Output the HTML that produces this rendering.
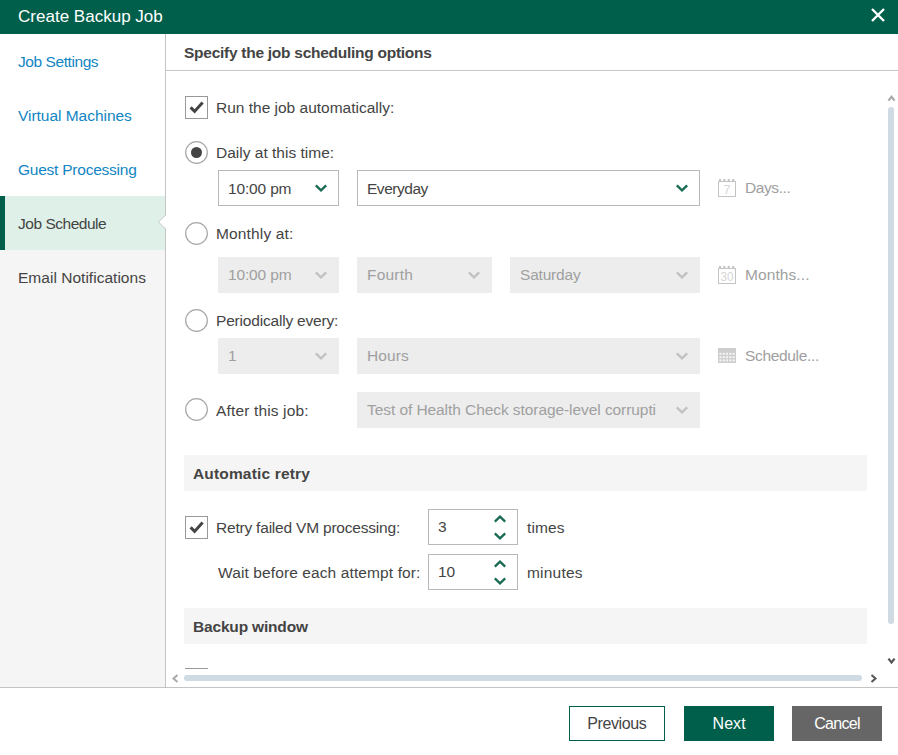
<!DOCTYPE html>
<html>
<head>
<meta charset="utf-8">
<title>Create Backup Job</title>
<style>
*{box-sizing:border-box;margin:0;padding:0}
html,body{width:898px;height:755px;overflow:hidden;background:#fff}
body{font-family:"Liberation Sans",sans-serif;font-size:15.5px;color:#444;position:relative}
.abs{position:absolute}
.t{position:absolute;white-space:nowrap;line-height:20px;height:20px;margin-top:1px}
.bd{font-weight:bold}
.st{margin-top:1px}
.ds{color:#a0a0a0;margin-top:0}
.lnk{color:#a0a0a0;margin-top:0}
.bt{font-size:16px;margin-top:0;line-height:22px;height:22px}
.cb{position:absolute;width:23px;height:23px;border:1px solid #999;background:#fff}
.sec{position:absolute;left:184px;width:683px;height:36px;background:#f5f5f5}
</style>
</head>
<body>
<div class="abs" style="left:0;top:0;width:898px;height:34px;background:#005f4b"></div>
<svg class="abs" style="left:871px;top:8px" width="14" height="14" viewBox="0 0 14 14"><path d="M1 1L13 13M13 1L1 13" stroke="#fff" stroke-width="2.4" fill="none"/></svg>
<div class="abs" style="left:0;top:34px;width:166px;height:653px;border-right:1px solid #c4c4c4;background:#f5f5f5"></div>
<div class="abs" style="left:0;top:34px;width:165px;height:162px;background:#fff"></div>
<div class="abs" style="left:0;top:196px;width:165px;height:54px;background:#dff0e8;border-left:5px solid #005f4b"></div>
<svg class="abs" style="left:158px;top:215px" width="8" height="14" viewBox="0 0 8 14"><path d="M8 0L0.5 7L8 14Z" fill="#fff"/><path d="M7.5 0L0.5 7L7.5 14" stroke="#c8c8c8" stroke-width="1" fill="none"/></svg>
<div class="abs" style="left:166px;top:70px;width:732px;height:1px;background:#c8c8c8"></div>

<div class="cb" style="left:185px;top:96px"><svg width="21" height="21" viewBox="0 0 21 21"><path d="M4.6 10.4L8.6 14.4L16.6 5.6" stroke="#444" stroke-width="3" fill="none"/></svg></div>
<svg class="abs" style="left:185px;top:141px" width="23" height="23" viewBox="0 0 23 23"><circle cx="11.5" cy="11.5" r="10.85" fill="#fff" stroke="#a8a8a8" stroke-width="1.25"/><circle cx="11.5" cy="11.5" r="5.5" fill="#444"/></svg>
<div class="abs" style="left:218px;top:170px;width:121px;height:36px;background:#fff;border:1px solid #b8b8b8"></div><svg class="abs" style="left:315px;top:184px" width="12" height="8" viewBox="0 0 12 8"><path d="M0.8 1.4L6 6.3L11.2 1.4" stroke="#1a6b54" stroke-width="2.4" fill="none"/></svg>
<div class="abs" style="left:357px;top:170px;width:343px;height:36px;background:#fff;border:1px solid #b8b8b8"></div><svg class="abs" style="left:676px;top:184px" width="12" height="8" viewBox="0 0 12 8"><path d="M0.8 1.4L6 6.3L11.2 1.4" stroke="#1a6b54" stroke-width="2.4" fill="none"/></svg>
<svg class="abs" style="left:718px;top:179px" width="18" height="18" viewBox="0 0 18 18"><rect x="0.5" y="2.5" width="17" height="15" fill="#fff" stroke="#c4c4c4"/><path d="M1 0h2.1v2h-2.1zM5.3 0h2.1v2h-2.1zM9.7 0h2.1v2h-2.1zM14.2 0h2.1v2h-2.1z" fill="#c4c4c4"/><text x="9" y="14.6" font-family="Liberation Sans" font-size="12.5" fill="#d6d6d6" text-anchor="middle" >7</text></svg>
<svg class="abs" style="left:185px;top:222px" width="23" height="23" viewBox="0 0 23 23"><circle cx="11.5" cy="11.5" r="10.85" fill="#fff" stroke="#a8a8a8" stroke-width="1.25"/></svg>
<div class="abs" style="left:218px;top:257px;width:121px;height:36px;background:#ededed"></div><svg class="abs" style="left:315px;top:271px" width="12" height="8" viewBox="0 0 12 8"><path d="M0.8 1.4L6 6.3L11.2 1.4" stroke="#c2c2c2" stroke-width="2.4" fill="none"/></svg>
<div class="abs" style="left:357px;top:257px;width:135px;height:36px;background:#ededed"></div><svg class="abs" style="left:468px;top:271px" width="12" height="8" viewBox="0 0 12 8"><path d="M0.8 1.4L6 6.3L11.2 1.4" stroke="#c2c2c2" stroke-width="2.4" fill="none"/></svg>
<div class="abs" style="left:510px;top:257px;width:190px;height:36px;background:#ededed"></div><svg class="abs" style="left:676px;top:271px" width="12" height="8" viewBox="0 0 12 8"><path d="M0.8 1.4L6 6.3L11.2 1.4" stroke="#c2c2c2" stroke-width="2.4" fill="none"/></svg>
<svg class="abs" style="left:718px;top:266px" width="18" height="18" viewBox="0 0 18 18"><rect x="0.5" y="2.5" width="17" height="15" fill="#fff" stroke="#c4c4c4"/><path d="M1 0h2.1v2h-2.1zM5.3 0h2.1v2h-2.1zM9.7 0h2.1v2h-2.1zM14.2 0h2.1v2h-2.1z" fill="#c4c4c4"/><text x="9" y="14.6" font-family="Liberation Sans" font-size="12.5" fill="#d6d6d6" text-anchor="middle" textLength="13" lengthAdjust="spacingAndGlyphs">30</text></svg>
<svg class="abs" style="left:185px;top:309px" width="23" height="23" viewBox="0 0 23 23"><circle cx="11.5" cy="11.5" r="10.85" fill="#fff" stroke="#a8a8a8" stroke-width="1.25"/></svg>
<div class="abs" style="left:218px;top:338px;width:121px;height:36px;background:#ededed"></div><svg class="abs" style="left:315px;top:352px" width="12" height="8" viewBox="0 0 12 8"><path d="M0.8 1.4L6 6.3L11.2 1.4" stroke="#c2c2c2" stroke-width="2.4" fill="none"/></svg>
<div class="abs" style="left:357px;top:338px;width:343px;height:36px;background:#ededed"></div><svg class="abs" style="left:676px;top:352px" width="12" height="8" viewBox="0 0 12 8"><path d="M0.8 1.4L6 6.3L11.2 1.4" stroke="#c2c2c2" stroke-width="2.4" fill="none"/></svg>
<svg class="abs" style="left:718px;top:348px" width="18" height="15" viewBox="0 0 18 15"><rect width="18" height="15" fill="#cdcdcd"/><g fill="#f4f4f4"><rect x="1.4" y="4.8" width="2.1" height="2.1"/><rect x="4.7" y="4.8" width="2.1" height="2.1"/><rect x="8.0" y="4.8" width="2.1" height="2.1"/><rect x="11.3" y="4.8" width="2.1" height="2.1"/><rect x="14.6" y="4.8" width="2.1" height="2.1"/><rect x="1.4" y="8.1" width="2.1" height="2.1"/><rect x="4.7" y="8.1" width="2.1" height="2.1"/><rect x="8.0" y="8.1" width="2.1" height="2.1"/><rect x="11.3" y="8.1" width="2.1" height="2.1"/><rect x="14.6" y="8.1" width="2.1" height="2.1"/><rect x="1.4" y="11.4" width="2.1" height="2.1"/><rect x="4.7" y="11.4" width="2.1" height="2.1"/><rect x="8.0" y="11.4" width="2.1" height="2.1"/><rect x="11.3" y="11.4" width="2.1" height="2.1"/><rect x="14.6" y="11.4" width="2.1" height="2.1"/></g></svg>
<svg class="abs" style="left:185px;top:398px" width="23" height="23" viewBox="0 0 23 23"><circle cx="11.5" cy="11.5" r="10.85" fill="#fff" stroke="#a8a8a8" stroke-width="1.25"/></svg>
<div class="abs" style="left:357px;top:392px;width:343px;height:36px;background:#ededed"></div><svg class="abs" style="left:676px;top:406px" width="12" height="8" viewBox="0 0 12 8"><path d="M0.8 1.4L6 6.3L11.2 1.4" stroke="#c2c2c2" stroke-width="2.4" fill="none"/></svg>
<div class="sec" style="top:455px"></div>
<div class="cb" style="left:185px;top:516px"><svg width="21" height="21" viewBox="0 0 21 21"><path d="M4.6 10.4L8.6 14.4L16.6 5.6" stroke="#444" stroke-width="3" fill="none"/></svg></div>
<div class="abs" style="left:428px;top:509px;width:90px;height:36px;background:#fff;border:1px solid #b8b8b8"></div><svg class="abs" style="left:494px;top:515px" width="12" height="8" viewBox="0 0 12 8"><path d="M0.8 6.6L6 1.7L11.2 6.6" stroke="#1a6b54" stroke-width="2.4" fill="none"/></svg><svg class="abs" style="left:494px;top:532px" width="12" height="8" viewBox="0 0 12 8"><path d="M0.8 1.4L6 6.3L11.2 1.4" stroke="#1a6b54" stroke-width="2.4" fill="none"/></svg>
<div class="abs" style="left:428px;top:554px;width:90px;height:36px;background:#fff;border:1px solid #b8b8b8"></div><svg class="abs" style="left:494px;top:560px" width="12" height="8" viewBox="0 0 12 8"><path d="M0.8 6.6L6 1.7L11.2 6.6" stroke="#1a6b54" stroke-width="2.4" fill="none"/></svg><svg class="abs" style="left:494px;top:577px" width="12" height="8" viewBox="0 0 12 8"><path d="M0.8 1.4L6 6.3L11.2 1.4" stroke="#1a6b54" stroke-width="2.4" fill="none"/></svg>
<div class="sec" style="top:608px"></div>
<div class="abs" style="left:185px;top:668px;width:23px;height:1px;background:#999"></div>
<div class="abs" style="left:888px;top:107px;width:6px;height:517px;border-radius:3px;background:#d0dae3"></div>
<svg class="abs" style="left:887px;top:94px" width="9" height="8" viewBox="0 0 9 8"><path d="M1.4 6.6L4.5 2.8L7.6 6.6" stroke="#aaa" stroke-width="2.2" fill="none"/></svg>
<svg class="abs" style="left:887px;top:657px" width="9" height="8" viewBox="0 0 9 8"><path d="M1.4 1.6L4.5 5.4L7.6 1.6" stroke="#555" stroke-width="2.2" fill="none"/></svg>
<div class="abs" style="left:184px;top:675px;width:678px;height:6px;border-radius:3px;background:#d0dae3"></div>
<svg class="abs" style="left:171px;top:674px" width="8" height="9" viewBox="0 0 8 9"><path d="M6.5 1L2.5 4.5L6.5 8" stroke="#aaa" stroke-width="2" fill="none"/></svg>
<svg class="abs" style="left:870px;top:674px" width="8" height="9" viewBox="0 0 8 9"><path d="M1.5 1L5.5 4.5L1.5 8" stroke="#555" stroke-width="2" fill="none"/></svg>
<div class="abs" style="left:0;top:687px;width:898px;height:1px;background:#c4c4c4"></div>
<div class="abs" style="left:0;top:688px;width:898px;height:67px;background:#fff"></div>
<div class="abs" style="left:569px;top:706px;width:96px;height:35px;border:1px solid #005f4b;background:#fff"></div>
<div class="abs" style="left:684px;top:706px;width:90px;height:35px;background:#005f4b"></div>
<div class="abs" style="left:792px;top:706px;width:90px;height:35px;background:#666"></div>
<div id="hd" class="t " style="left:18.00px;top:6px;letter-spacing:0.012px;color:#fff;font-size:17px;line-height:22px;height:22px;margin-top:0">Create Backup Job</div>
<div id="n1" class="t " style="left:18.00px;top:51px;letter-spacing:-0.429px;color:#1285c3">Job Settings</div>
<div id="n2" class="t " style="left:18.00px;top:105px;letter-spacing:-0.029px;color:#1285c3">Virtual Machines</div>
<div id="n3" class="t " style="left:18.00px;top:159px;letter-spacing:-0.238px;color:#1285c3">Guest Processing</div>
<div id="n4" class="t " style="left:18.00px;top:213px;letter-spacing:-0.475px;">Job Schedule</div>
<div id="n5" class="t " style="left:18.00px;top:267px;letter-spacing:0.022px;">Email Notifications</div>
<div id="ti" class="t bd" style="left:184.00px;top:42px;letter-spacing:-0.265px;">Specify the job scheduling options</div>
<div id="run" class="t " style="left:216.00px;top:97px;letter-spacing:-0.005px;">Run the job automatically:</div>
<div id="dly" class="t " style="left:216.00px;top:142px;letter-spacing:0.005px;">Daily at this time:</div>
<div id="s1" class="t st" style="left:228.00px;top:178px;letter-spacing:-0.156px;">10:00 pm</div>
<div id="s2" class="t st" style="left:367.00px;top:178px;letter-spacing:-0.468px;">Everyday</div>
<div id="l1" class="t lnk" style="left:745.00px;top:178px;letter-spacing:-0.405px;">Days...</div>
<div id="mon" class="t " style="left:216.00px;top:223px;letter-spacing:0.148px;">Monthly at:</div>
<div id="s3" class="t st ds" style="left:228.00px;top:265px;letter-spacing:-0.145px;">10:00 pm</div>
<div id="s4" class="t st ds" style="left:367.00px;top:265px;letter-spacing:0.218px;">Fourth</div>
<div id="s5" class="t st ds" style="left:520.00px;top:265px;letter-spacing:-0.200px;">Saturday</div>
<div id="l2" class="t lnk" style="left:745.00px;top:265px;letter-spacing:0.088px;">Months...</div>
<div id="per" class="t " style="left:216.00px;top:310px;letter-spacing:-0.188px;">Periodically every:</div>
<div id="s6" class="t st ds" style="left:228.00px;top:346px;letter-spacing:0.000px;">1</div>
<div id="s7" class="t st ds" style="left:367.00px;top:346px;letter-spacing:0.100px;">Hours</div>
<div id="l3" class="t lnk" style="left:745.00px;top:346px;letter-spacing:-0.336px;">Schedule...</div>
<div id="aft" class="t " style="left:216.00px;top:400px;letter-spacing:0.150px;">After this job:</div>
<div id="s8" class="t st ds" style="left:367.00px;top:400px;letter-spacing:-0.071px;">Test of Health Check storage-level corrupti</div>
<div id="h1" class="t bd" style="left:193.00px;top:463px;letter-spacing:0.160px;">Automatic retry</div>
<div id="rty" class="t " style="left:216.00px;top:517px;letter-spacing:-0.204px;">Retry failed VM processing:</div>
<div id="s9" class="t st" style="left:438.00px;top:516px;letter-spacing:0.000px;">3</div>
<div id="tms" class="t " style="left:527.00px;top:517px;letter-spacing:0.136px;">times</div>
<div id="wt" class="t " style="left:218.00px;top:562px;letter-spacing:0.109px;">Wait before each attempt for:</div>
<div id="s10" class="t st" style="left:438.00px;top:561px;letter-spacing:-0.187px;">10</div>
<div id="mns" class="t " style="left:527.00px;top:562px;letter-spacing:0.200px;">minutes</div>
<div id="h2" class="t bd" style="left:193.00px;top:616px;letter-spacing:-0.178px;">Backup window</div>
<div id="b1" class="t bt" style="left:587.17px;top:713px;letter-spacing:-0.371px;color:#444">Previous</div>
<div id="b2" class="t bt" style="left:712.54px;top:713px;letter-spacing:0.062px;color:#fff">Next</div>
<div id="b3" class="t bt" style="left:814.25px;top:713px;letter-spacing:-0.684px;color:#fff">Cancel</div>
</body>
</html>
